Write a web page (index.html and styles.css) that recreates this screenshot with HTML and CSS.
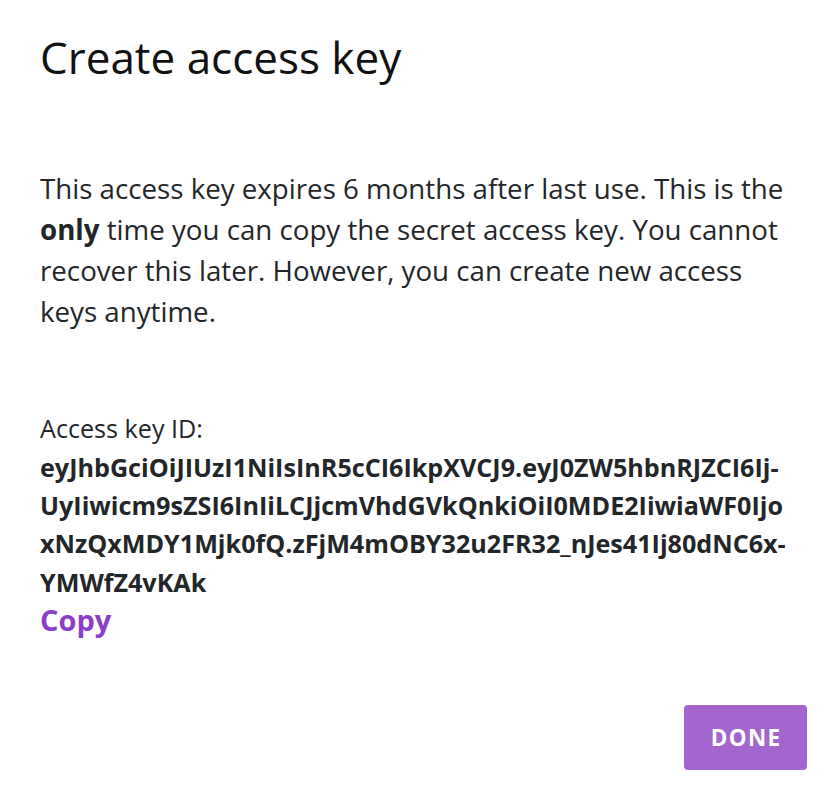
FILE: index.html
```html
<!DOCTYPE html>
<html lang="en">
<head>
<meta charset="utf-8">
<title>Create access key</title>
<link rel="stylesheet" href="styles.css">
</head>
<body>
<div class="dialog">
  <h1 class="dialog-title">Create access key</h1>
  <div class="dialog-content">
    <p class="notice">This access key expires 6 months after last use. This is the <strong>only</strong> time you can copy the secret access key. You cannot recover this later. However, you can create new access keys anytime.</p>
    <div class="key-block">
      <div class="key-label">Access key ID:</div>
      <div class="key-value">eyJhbGciOiJIUzI1NiIsInR5cCI6IkpXVCJ9.eyJ0ZW5hbnRJZCI6Ij-UyIiwicm9sZSI6InIiLCJjcmVhdGVkQnkiOiI0MDE2IiwiaWF0IjoxNzQxMDY1Mjk0fQ.zFjM4mOBY32u2FR32_nJes41Ij80dNC6x-YMWfZ4vKAk</div>
      <a class="copy-link" href="#">Copy</a>
    </div>
  </div>
  <div class="dialog-actions">
    <button class="btn-done" type="button">DONE</button>
  </div>
</div>
</body>
</html>
```
FILE: styles.css
```css
html, body {
  margin: 0;
  padding: 0;
  background: #ffffff;
}
body {
  font-family: "Open Sans", "Noto Sans", "Liberation Sans", sans-serif;
  color: #232629;
}
.dialog {
  width: 840px;
  height: 802px;
  box-sizing: border-box;
  display: flex;
  flex-direction: column;
}
.dialog-title {
  margin: 31px 48px 0 40px;
  font-size: 44px;
  font-weight: 400;
  line-height: 52.8px;
  color: #111111;
}
.dialog-content {
  padding: 0 48px 0 40px;
}
.notice {
  margin: 84px 0 0 0;
  font-size: 27.7px;
  line-height: 41.2px;
}
.notice strong {
  font-weight: 700;
}
.key-block {
  margin-top: 76.6px;
  font-size: 25.15px;
  line-height: 38.4px;
}
.key-value {
  font-weight: 700;
  overflow-wrap: anywhere;
}
.copy-link {
  display: block;
  font-size: 29px;
  font-weight: 700;
  line-height: 38.5px;
  color: #8b3fc8;
  text-decoration: none;
}
.dialog-actions {
  display: flex;
  justify-content: flex-end;
  padding: 0 33px 0 40px;
  margin-top: 65.6px;
}
.btn-done {
  height: 65px;
  width: 123px;
  border: none;
  border-radius: 4px;
  background: #a366cf;
  color: #ffffff;
  font-family: "Open Sans", "Noto Sans", "Liberation Sans", sans-serif;
  font-size: 22.5px;
  font-weight: 700;
  letter-spacing: 1.3px;
  padding: 0 0 0 1.3px;
  cursor: pointer;
}
```
